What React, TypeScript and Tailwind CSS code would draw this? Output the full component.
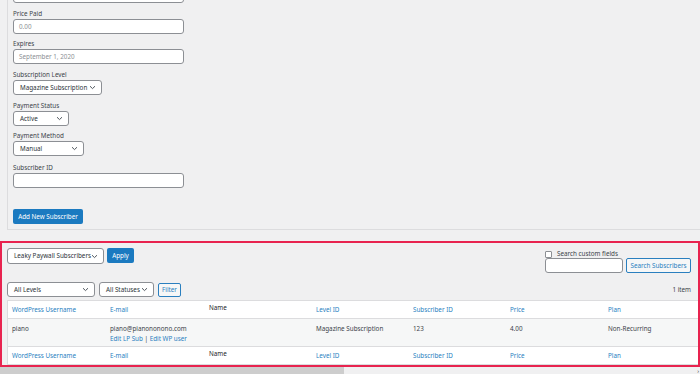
import { useState } from 'react';

function Chevron() {
    return (
        <svg width="7" height="5" viewBox="0 0 7 5" className="shrink-0">
            <path d="M1 1.2 L3.5 3.6 L6 1.2" fill="none" stroke="#50575e" strokeWidth="1" />
        </svg>
    );
}

function Select({ value, w }: { value: string; w: string }) {
    return (
        <div className={`${w} h-[15px] bg-white border border-[#8c8f94] rounded-[3px] flex items-center justify-between pl-[6px] pr-[5px] text-[#2c3338]`}>
            <span className="whitespace-nowrap">{value}</span>
            <Chevron />
        </div>
    );
}

function Input({ value, w = 'w-[171px]', placeholder = false }: { value?: string; w?: string; placeholder?: boolean }) {
    return (
        <div className={`${w} h-[15px] bg-white border border-[#8c8f94] rounded-[3px] flex items-center pl-[5px] ${placeholder ? 'text-[#8c8f94]' : 'text-[#2c3338]'}`}>
            {value}
        </div>
    );
}

const cols = ['w-[98px]', 'w-[99px]', 'w-[107px]', 'w-[97px]', 'w-[97px]', 'w-[98px]', 'flex-1'];
const headers = ['WordPress Username', 'E-mail', 'Name', 'Level ID', 'Subscriber ID', 'Price', 'Plan'];

function HeadRow({ border }: { border: string }) {
    return (
        <div className={`flex h-[18px] bg-white ${border} border-[#dcdcde]`}>
            {headers.map((h, i) => (
                <div key={h} className={`${cols[i]} pl-[4px] flex ${h === 'Name' ? 'items-start pt-[2px] text-[#1d2327]' : 'items-center text-[#2a7fbf]'}`}>
                    {h}
                </div>
            ))}
        </div>
    );
}

export default function App() {
    const [checked, setChecked] = useState(false);

    return (
        <div className="w-[700px] h-[374px] bg-[#f0f0f1] overflow-hidden flex flex-col font-['Noto_Sans',sans-serif] text-[6.3px] leading-[10px] text-[#3c434a]">
            {/* add subscriber form */}
            <div className="ml-[7px] h-[230px] shrink-0 border-l border-b border-[#dcdcde] pl-[5px] flex flex-col">
                <div className="-mt-[12px] w-[171px] h-[15px] bg-white border border-[#8c8f94] rounded-[3px]" />
                <p className="mt-[6px] h-[10px]">Price Paid</p>
                <Input value="0.00" placeholder />
                <p className="mt-[5px] h-[10px]">Expires</p>
                <Input value="September 1, 2020" placeholder />
                <p className="mt-[6px] h-[10px]">Subscription Level</p>
                <Select value="Magazine Subscription" w="w-[89px]" />
                <p className="mt-[6px] h-[10px]">Payment Status</p>
                <Select value="Active" w="w-[56px]" />
                <p className="mt-[5px] h-[10px]">Payment Method</p>
                <Select value="Manual" w="w-[71px]" />
                <p className="mt-[7px] h-[10px]">Subscriber ID</p>
                <Input />
                <button className="mt-[21px] w-[70px] h-[15px] bg-[#1b7ac0] text-white rounded-[2px] flex items-center justify-center">Add New Subscriber</button>
            </div>

            {/* subscribers list */}
            <div className="mt-[11px] h-[126px] shrink-0 border-2 border-[#e8234f] pl-[5px] pt-[5px] flex flex-col">
                <div className="flex justify-between h-[30px]">
                    <div className="flex items-start gap-[3px]">
                        <Select value="Leaky Paywall Subscribers" w="w-[97px] !h-[16px]" />
                        <button className="w-[27px] h-[15px] bg-[#1b7ac0] text-white rounded-[2px]">Apply</button>
                    </div>
                    <div className="flex flex-col items-start pr-[7px]">
                        <label className="flex items-center gap-[5px] h-[10px] mt-[1px]">
                            <input type="checkbox" checked={checked} onChange={() => setChecked(!checked)} className="appearance-none w-[7px] h-[7px] border border-[#8c8f94] rounded-[1px] bg-white" />
                            Search custom fields
                        </label>
                        <div className="flex items-center gap-[3px] -mt-[1px]">
                            <Input w="w-[78px]" />
                            <button className="w-[65px] h-[15px] border border-[#2a7fbf] bg-[#f6f7f7] text-[#2a7fbf] rounded-[2px]">Search Subscribers</button>
                        </div>
                    </div>
                </div>
                <div className="flex items-center justify-between h-[15px] mt-[5px] pr-[7px]">
                    <div className="flex items-center gap-[4px]">
                        <Select value="All Levels" w="w-[88px]" />
                        <Select value="All Statuses" w="w-[55px]" />
                        <button className="w-[23px] h-[14px] border border-[#2a7fbf] bg-[#f6f7f7] text-[#2a7fbf] rounded-[2px]">Filter</button>
                    </div>
                    <span className="text-[#3c434a]">1 item</span>
                </div>
                <div className="mt-[3px] border border-r-0 border-[#dcdcde] flex flex-col">
                    <HeadRow border="border-b" />
                    <div className="flex h-[27px] bg-[#f6f7f7] pt-[5px]">
                        <div className={`${cols[0]} pl-[4px]`}>piano</div>
                        <div className={`${cols[1]} pl-[4px]`}>
                            <div>piano@pianononono.com</div>
                            <div className="text-[#2a7fbf]">Edit LP Sub <span className="text-[#3c434a]">|</span> Edit WP user</div>
                        </div>
                        <div className={`${cols[2]} pl-[4px]`} />
                        <div className={`${cols[3]} pl-[4px]`}>Magazine Subscription</div>
                        <div className={`${cols[4]} pl-[4px]`}>123</div>
                        <div className={`${cols[5]} pl-[4px]`}>4.00</div>
                        <div className={`${cols[6]} pl-[4px]`}>Non-Recurring</div>
                    </div>
                    <HeadRow border="border-t" />
                </div>
            </div>

            {/* horizontal scrollbar */}
            <div className="h-[7px] flex items-center">
                <div className="w-[344px] h-full bg-[#cdcdcd]" />
                <div className="flex-1" />
                <span className="text-[6px] leading-none pr-[1px] text-[#333]">›</span>
            </div>
        </div>
    );
}
